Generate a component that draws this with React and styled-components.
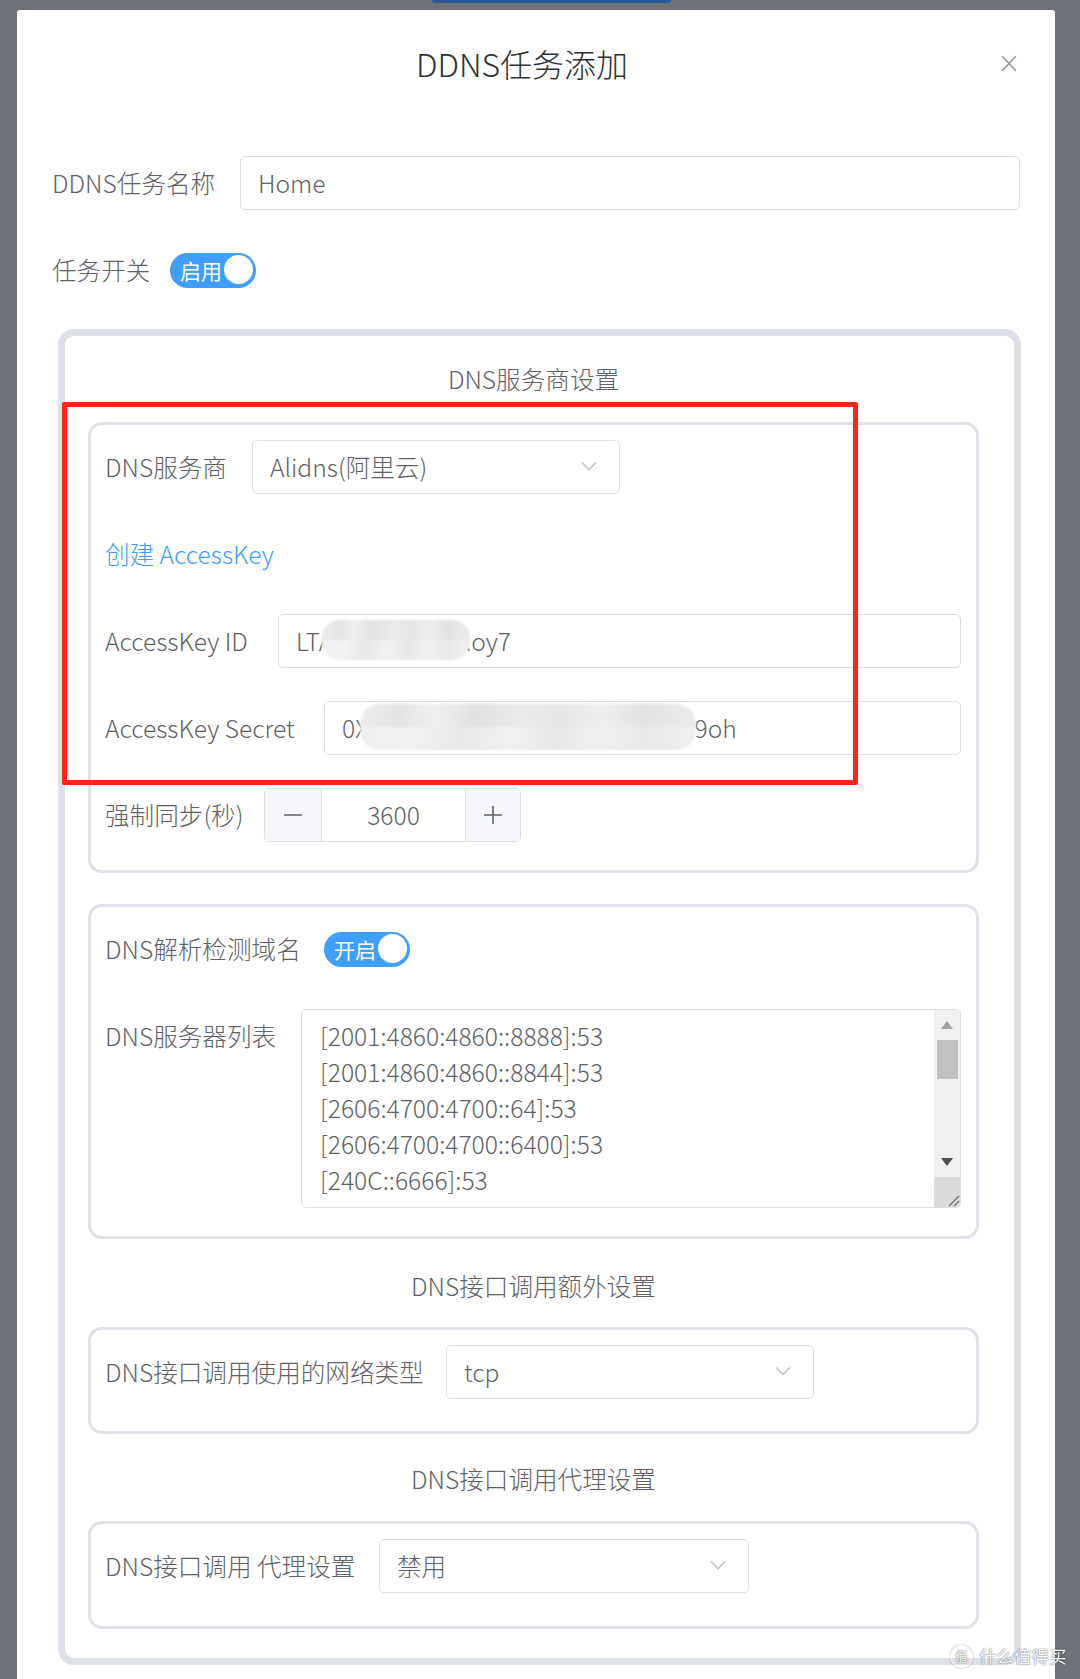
import React from 'react';
import styled, { createGlobalStyle } from 'styled-components';

const GlobalStyle = createGlobalStyle`
  html, body { margin: 0; padding: 0; background: #6f7278; }
  body { font-family: "Noto Sans CJK SC", "Noto Sans", sans-serif; font-weight: 300; }
  * { box-sizing: border-box; }
`;

const Page = styled.div`
  position: relative;
  width: 1080px;
  height: 1679px;
  overflow: hidden;
  background: #6f7278;
  display: flex;
  flex-direction: column;
`;

const PeekTab = styled.div`
  margin-left: 432px;
  width: 239px;
  height: 3px;
  background: #2b5b9b;
  border-radius: 0 0 3px 3px;
  flex-shrink: 0;
`;

const Modal = styled.div`
  margin: 7px 0 0 17px;
  width: 1038px;
  flex: 1;
  background: #fff;
  border-radius: 3px 3px 0 0;
  padding: 0 35px;
  display: flex;
  flex-direction: column;
`;

const Header = styled.div`
  display: flex;
  align-items: flex-start;
  padding-top: 33px;
  margin-right: 3px;
  margin-bottom: 72px;
`;

const Title = styled.div`
  flex: 1;
  text-align: center;
  font-size: 32px;
  line-height: 41px;
  color: #303133;
`;

const CloseBtn = styled.div`
  width: 16px;
  height: 17px;
  margin: 12px 0 0 9px;
  display: flex;
`;

const FormItem = styled.div`
  display: flex;
  align-items: ${p => (p.$top ? 'flex-start' : 'center')};
  min-height: 54px;
  flex-shrink: 0;
  margin-top: ${p => p.$mt || 0}px;
`;

const Label = styled.div`
  width: ${p => p.$w}px;
  flex-shrink: 0;
  font-size: 24.6px;
  line-height: 52px;
  padding-bottom: 2px;
  color: #606266;
  white-space: nowrap;
`;

const Input = styled.div`
  flex: 1;
  height: 54px;
  border: 1px solid #dcdfe6;
  border-radius: 5px;
  padding: 0 17px 2px;
  display: flex;
  align-items: center;
  font-size: 24.6px;
  color: #606266;
  white-space: nowrap;
  overflow: hidden;
`;

const Blur = styled.span`
  display: inline-block;
  width: ${p => p.$w}px;
  height: ${p => p.$h}px;
  margin-left: ${p => p.$ml}px;
  margin-right: ${p => p.$mr}px;
  border-radius: 20px;
  filter: blur(1.2px);
  background:
    linear-gradient(to right, #ececec 0%, #e4e4e4 12%, #efefef 22%, #e2e2e2 34%, #eaeaea 48%, #e6e6e6 60%, #eeeeee 72%, #e3e3e3 84%, #ebebeb 100%) top / 100% 50% no-repeat,
    linear-gradient(to right, #efefef 0%, #f2f2f2 15%, #e8e8e8 30%, #f1f1f1 45%, #e7e7e7 58%, #f0f0f0 70%, #e9e9e9 85%, #f0f0f0 100%) bottom / 100% 50% no-repeat;
`;

const Select = styled.div`
  width: ${p => p.$w}px;
  height: 54px;
  border: 1px solid #dcdfe6;
  border-radius: 5px;
  padding: 0 22px 2px 17px;
  display: flex;
  align-items: center;
  justify-content: space-between;
  font-size: 24.6px;
  color: #606266;
`;

const Switch = styled.div`
  width: 86px;
  height: 35px;
  border-radius: 18px;
  background: #409eff;
  display: flex;
  align-items: center;
  padding: 0 3px 1px 10px;
  color: #fff;
  font-size: 21px;
  font-weight: 400;
`;

const Knob = styled.span`
  width: 29px;
  height: 29px;
  border-radius: 50%;
  background: #fff;
  margin-left: auto;
`;

const OuterCard = styled.div`
  margin: 32px -1px 0 6px;
  border: 7px solid #dde0e7;
  border-radius: 16px;
  padding: 0 35px 29px 23px;
  display: flex;
  flex-direction: column;
`;

const SectionTitle = styled.div`
  text-align: center;
  font-size: 24.6px;
  line-height: 34px;
  color: #606266;
  margin: ${p => p.$mt}px 0 ${p => p.$mb}px;
`;

const InnerCard = styled.div`
  border: 3px solid #dfe2e8;
  border-radius: 14px;
  padding: 15px 15px ${p => p.$pb || 28}px 14px;
  margin-bottom: ${p => p.$mb || 0}px;
  display: flex;
  flex-direction: column;
  gap: 33px;
`;

const Link = styled.div`
  font-size: 24.6px;
  line-height: 52px;
  padding-bottom: 2px;
  color: #409eff;
`;

const NumberBox = styled.div`
  width: 257px;
  height: 54px;
  border: 1px solid #dcdfe6;
  border-radius: 5px;
  display: flex;
  overflow: hidden;
`;

const StepBtn = styled.div`
  width: ${p => p.$w}px;
  background: #f5f7fa;
  display: flex;
  align-items: center;
  justify-content: center;
  ${p => (p.$side === 'left' ? 'border-right: 1px solid #dcdfe6;' : 'border-left: 1px solid #dcdfe6;')}
`;

const NumValue = styled.div`
  flex: 1;
  display: flex;
  align-items: center;
  justify-content: center;
  padding-bottom: 2px;
  font-size: 24.6px;
  color: #606266;
`;

const TextArea = styled.div`
  flex: 1;
  height: 199px;
  border: 1px solid #dcdfe6;
  border-radius: 5px;
  display: flex;
  overflow: hidden;
`;

const Lines = styled.div`
  flex: 1;
  padding: 7px 18px;
  font-size: 24.6px;
  line-height: 36px;
  color: #606266;
  white-space: pre;
`;

const ScrollBar = styled.div`
  width: 26px;
  background: #f0f0f0;
  display: flex;
  flex-direction: column;
  align-items: center;
`;

const Arrow = styled.div`
  height: 30px;
  width: 100%;
  display: flex;
  align-items: center;
  justify-content: center;
`;

const Thumb = styled.div`
  width: 21px;
  height: 39px;
  background: #c1c1c1;
`;

const Spacer = styled.div`
  flex: 1;
`;

const Corner = styled.div`
  width: 100%;
  height: 30px;
  background: #dcdcdc;
  display: flex;
  align-items: flex-end;
  justify-content: flex-end;
`;

const RedBox = styled.div`
  position: absolute;
  left: 62px;
  top: 402px;
  width: 796px;
  height: 383px;
  border: 5px solid #ff2318;
  border-radius: 2px;
  pointer-events: none;
`;

const Watermark = styled.div`
  position: absolute;
  left: 950px;
  top: 1644px;
  width: 125px;
  display: flex;
  align-items: center;
  gap: 6px;
  white-space: nowrap;
  color: #fafafa;
  text-shadow: 0 0 1px rgba(0, 0, 0, 0.6), 0 0 2px rgba(0, 0, 0, 0.3);
  font-size: 17.5px;
  line-height: 24px;
  font-weight: 400;
`;

const WmCircle = styled.span`
  width: 23px;
  height: 23px;
  flex-shrink: 0;
  border-radius: 50%;
  border: 1.5px solid #fafafa;
  box-shadow: 0 0 1.5px rgba(0, 0, 0, 0.5);
  font-size: 13px;
  display: flex;
  align-items: center;
  justify-content: center;
`;

const Chevron = () => (
  <svg width="16" height="10" viewBox="0 0 16 10">
    <path d="M1 1.5 L8 8.5 L15 1.5" fill="none" stroke="#c0c4cc" strokeWidth="1.6" />
  </svg>
);

const Toggle = ({ text }) => (
  <Switch>
    {text}
    <Knob />
  </Switch>
);

const servers = [
  '[2001:4860:4860::8888]:53',
  '[2001:4860:4860::8844]:53',
  '[2606:4700:4700::64]:53',
  '[2606:4700:4700::6400]:53',
  '[240C::6666]:53',
];

export default function App() {
  return (
    <>
      <GlobalStyle />
      <Page>
        <PeekTab />
        <Modal>
          <Header>
            <Title>DDNS任务添加</Title>
            <CloseBtn>
              <svg width="16" height="17" viewBox="0 0 16 17">
                <path d="M1 1 L15 16 M15 1 L1 16" stroke="#909399" strokeWidth="1.5" fill="none" />
              </svg>
            </CloseBtn>
          </Header>

          <FormItem>
            <Label $w={188}>DDNS任务名称</Label>
            <Input>Home</Input>
          </FormItem>

          <FormItem $mt={33}>
            <Label $w={118}>任务开关</Label>
            <Toggle text="启用" />
          </FormItem>

          <OuterCard>
            <SectionTitle $mt={25} $mb={27}>DNS服务商设置</SectionTitle>

            <InnerCard $mb={31}>
              <FormItem>
                <Label $w={147}>DNS服务商</Label>
                <Select $w={368}>
                  <span>Alidns(阿里云)</span>
                  <Chevron />
                </Select>
              </FormItem>
              <FormItem>
                <Link>创建 AccessKey</Link>
              </FormItem>
              <FormItem>
                <Label $w={173}>AccessKey ID</Label>
                <Input>
                  LTA<Blur $w={150} $h={40} $ml={-12} $mr={-6} />.oy7
                </Input>
              </FormItem>
              <FormItem>
                <Label $w={219}>AccessKey Secret</Label>
                <Input>
                  0X<Blur $w={336} $h={46} $ml={-8} $mr={-2} />9oh
                </Input>
              </FormItem>
              <FormItem>
                <Label $w={159}>强制同步(秒)</Label>
                <NumberBox>
                  <StepBtn $w={57} $side="left">
                    <svg width="18" height="2" viewBox="0 0 18 2">
                      <path d="M0 1 H18" stroke="#606266" strokeWidth="1.6" />
                    </svg>
                  </StepBtn>
                  <NumValue>3600</NumValue>
                  <StepBtn $w={55} $side="right">
                    <svg width="18" height="18" viewBox="0 0 18 18">
                      <path d="M0 9 H18 M9 0 V18" stroke="#606266" strokeWidth="1.6" />
                    </svg>
                  </StepBtn>
                </NumberBox>
              </FormItem>
            </InnerCard>

            <InnerCard>
              <FormItem>
                <Label $w={219}>DNS解析检测域名</Label>
                <Toggle text="开启" />
              </FormItem>
              <FormItem $top>
                <Label $w={196}>DNS服务器列表</Label>
                <TextArea>
                  <Lines>{servers.join('\n')}</Lines>
                  <ScrollBar>
                    <Arrow>
                      <svg width="12" height="8" viewBox="0 0 12 8">
                        <path d="M6 0 L12 8 L0 8 Z" fill="#a3a3a3" />
                      </svg>
                    </Arrow>
                    <Thumb />
                    <Spacer />
                    <Arrow>
                      <svg width="12" height="8" viewBox="0 0 12 8">
                        <path d="M0 0 L12 0 L6 8 Z" fill="#505050" />
                      </svg>
                    </Arrow>
                    <Corner>
                      <svg width="16" height="16" viewBox="0 0 16 16">
                        <path d="M15 5 L5 15 M15 10 L10 15" stroke="#707070" strokeWidth="1.3" />
                      </svg>
                    </Corner>
                  </ScrollBar>
                </TextArea>
              </FormItem>
            </InnerCard>

            <SectionTitle $mt={29} $mb={25}>DNS接口调用额外设置</SectionTitle>

            <InnerCard $pb={32}>
              <FormItem>
                <Label $w={341}>DNS接口调用使用的网络类型</Label>
                <Select $w={368}>
                  <span>tcp</span>
                  <Chevron />
                </Select>
              </FormItem>
            </InnerCard>

            <SectionTitle $mt={27} $mb={26}>DNS接口调用代理设置</SectionTitle>

            <InnerCard $pb={33}>
              <FormItem>
                <Label $w={274}>DNS接口调用 代理设置</Label>
                <Select $w={370}>
                  <span>禁用</span>
                  <Chevron />
                </Select>
              </FormItem>
            </InnerCard>
          </OuterCard>
        </Modal>

        <RedBox />
        <Watermark>
          <WmCircle>值</WmCircle>
          <span>什么值得买</span>
        </Watermark>
      </Page>
    </>
  );
}
